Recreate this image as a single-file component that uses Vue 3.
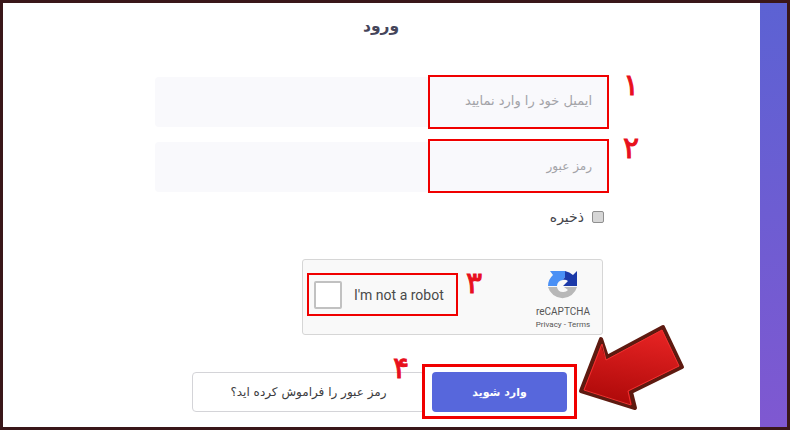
<script setup>
const marks = [
  { id: 'a', text: '۱' },
  { id: 'b', text: '۲' },
  { id: 'c', text: '۳' },
  { id: 'd', text: '۴' }
]
</script>

<template>
  <div class="frame">
    <main class="main">
      <h1 class="title">ورود</h1>
      <div class="field email"><span>ایمیل خود را وارد نمایید</span></div>
      <div class="field second"><span>رمز عبور</span></div>
      <label class="remember">
        <span class="check"></span>
        <span>ذخیره</span>
      </label>
      <div class="captcha">
        <div class="cap-left">
          <span class="cap-box"></span>
          <span class="cap-label">I'm not a robot</span>
        </div>
        <div class="cap-right">
          <svg class="cap-logo" viewBox="0 0 30 30" width="30" height="30">
            <path d="M0 15 A15 15 0 0 1 5 4 L2 0 L17 0 L17 6 L15 9 A6 6 0 0 0 9 15 Z" fill="#4a90f5" />
            <path d="M17 0 A15 15 0 0 1 25 4 L29 0 L29 15 L15 15 L20 10 A6 6 0 0 0 15 9 L17 6 Z" fill="#1c3aa9" />
            <path d="M0 16 L9 16 A6 6 0 0 0 15 21 A6 6 0 0 0 20 19 L16 16 L29 16 A15 15 0 0 1 0 16 Z" fill="#b8b8b8" />
          </svg>
          <span class="cap-name">reCAPTCHA</span>
          <span class="cap-links">Privacy - Terms</span>
        </div>
      </div>
      <div class="actions">
        <button class="btn-primary">وارد شوید</button>
        <button class="btn-ghost">رمز عبور را فراموش کرده اید؟</button>
      </div>

      <div class="hl hl-email"></div>
      <div class="hl hl-pass"></div>
      <div class="hl hl-cap"></div>
      <div class="hl hl-btn"></div>
      <span v-for="m in marks" :key="m.id" class="mark" :class="'mark-' + m.id">{{ m.text }}</span>

      <svg class="arrow" viewBox="0 0 110 95" width="110" height="95">
        <defs>
          <linearGradient id="redFill" x1="0.6" y1="0" x2="0.4" y2="1">
            <stop offset="0" stop-color="#e82424" />
            <stop offset="1" stop-color="#ab0808" />
          </linearGradient>
        </defs>
        <path d="M85 6 L104 46 L53 71 L57 87 L3 70 L23 18 L29 36 Z" fill="url(#redFill)" stroke="#5e1a10" stroke-width="4" stroke-linejoin="round" />
        <path d="M84 9 L101 45 L50 70 L53 84 L6 69 L24 23 L28 39 Z" fill="none" stroke="#f23030" stroke-width="1" stroke-linejoin="round" />
      </svg>
    </main>
    <aside class="side"></aside>
  </div>
</template>

<style>
html, body { margin: 0; background: #fff; }
</style>

<style scoped>
.frame {
  width: 790px;
  height: 430px;
  box-sizing: border-box;
  border: 3px solid #3a1719;
  display: flex;
  background: #fff;
  overflow: hidden;
}
.main {
  position: relative;
  flex: 1;
  padding-right: 1px;
  display: flex;
  flex-direction: column;
  align-items: center;
  font-family: "DejaVu Sans", sans-serif;
  direction: rtl;
}
.side {
  width: 27px;
  background: linear-gradient(180deg, #5c62d3, #7f58d1);
}
.title {
  margin: 11px 0 0;
  height: 63px;
  font-size: 15.5px;
  font-weight: 700;
  line-height: 24px;
  color: #45455a;
}
.field {
  width: 452px;
  height: 50px;
  box-sizing: border-box;
  padding: 0 15px 2px;
  background: #f9f9fc;
  border-radius: 4px;
  display: flex;
  align-items: center;
  font-size: 12px;
  color: #a3a3a8;
}
.email { font-size: 13px; padding-bottom: 4px; }
.second { margin-top: 15px; }
.remember {
  width: 452px;
  box-sizing: border-box;
  padding: 0 3px;
  margin-top: 16px;
  height: 18px;
  display: flex;
  align-items: center;
  gap: 8px;
  font-size: 14px;
  color: #44444a;
}
.check {
  width: 10px;
  height: 10px;
  background: #d6d6d6;
  border: 1px solid #8f8f8f;
  border-radius: 2px;
}
.captcha {
  direction: ltr;
  align-self: flex-start;
  width: 301px;
  height: 76px;
  box-sizing: border-box;
  margin: 33px 156px 0 0;
  background: #f9f9f9;
  border: 1px solid #d6d6d6;
  border-radius: 3px;
  display: flex;
  justify-content: space-between;
  font-family: Roboto, "Liberation Sans", sans-serif;
}
.cap-left {
  display: flex;
  align-items: center;
  padding-left: 11px;
  gap: 12px;
  height: 70px;
}
.cap-box {
  width: 24px;
  height: 24px;
  background: #fff;
  border: 2px solid #c1c1c1;
  border-radius: 2px;
}
.cap-label { font-size: 14px; color: #4a4a4a; }
.cap-right {
  width: 78px;
  display: flex;
  flex-direction: column;
  align-items: center;
  padding-top: 11px;
  color: #555;
}
.cap-logo { margin-bottom: 4px; }
.cap-name { font-size: 10px; line-height: 14px; }
.cap-links { font-size: 8px; line-height: 11px; white-space: nowrap; }
.actions {
  align-self: flex-start;
  margin: 37px 192px 0 0;
  display: flex;
  align-items: center;
}
.btn-primary, .btn-ghost {
  font-family: "DejaVu Sans", sans-serif;
  height: 40px;
  border-radius: 4px;
  box-sizing: border-box;
  font-size: 12px;
}
.btn-primary {
  width: 135px;
  border: 0;
  background: #5767dc;
  color: #fff;
  font-size: 11px;
  font-weight: 700;
  margin-left: 7px;
}
.btn-ghost {
  width: 233px;
  background: #fff;
  border: 1px solid #d4d4d8;
  color: #3c3c40;
}
.hl {
  position: absolute;
  box-sizing: border-box;
  border: 2px solid #f00000;
}
.hl-email { left: 425px; top: 72px; width: 181px; height: 54px; }
.hl-pass { left: 425px; top: 136px; width: 181px; height: 54px; }
.hl-cap { left: 304px; top: 270px; width: 151px; height: 43px; }
.hl-btn { left: 419px; top: 361px; width: 155px; height: 55px; border-width: 3px; }
.mark {
  position: absolute;
  color: #e8101c;
  font-family: "DejaVu Sans", sans-serif;
  font-weight: 400;
  font-size: 30px;
  line-height: 30px;
  -webkit-text-stroke: 1px #e8101c;
}
.mark-a { left: 620px; top: 67px; }
.mark-b { left: 620px; top: 130px; }
.mark-c { left: 463px; top: 265px; }
.mark-d { left: 390px; top: 350px; }
.arrow {
  position: absolute;
  left: 575px;
  top: 318px;
}
</style>
